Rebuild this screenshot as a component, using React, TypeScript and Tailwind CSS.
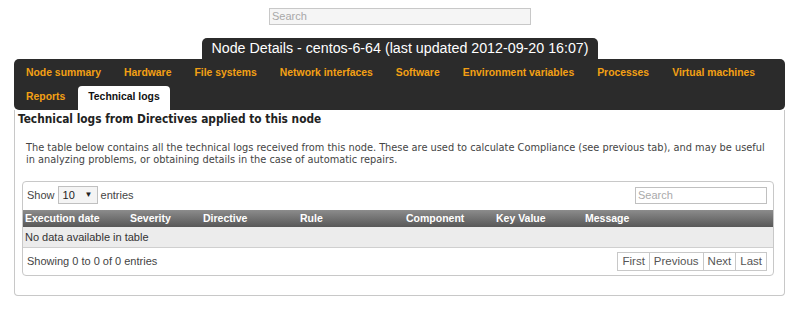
import React from "react";

const tabs = [
  "Node summary",
  "Hardware",
  "File systems",
  "Network interfaces",
  "Software",
  "Environment variables",
  "Processes",
  "Virtual machines",
  "Reports",
];

const cols: { label: string; w: string }[] = [
  { label: "Execution date", w: "w-[105px]" },
  { label: "Severity", w: "w-[73px]" },
  { label: "Directive", w: "w-[97px]" },
  { label: "Rule", w: "w-[106px]" },
  { label: "Component", w: "w-[90px]" },
  { label: "Key Value", w: "w-[89px]" },
  { label: "Message", w: "w-[100px]" },
];

export default function App() {
  return (
    <div className="w-[800px] h-[312px] bg-white font-['Liberation_Sans',Arial,sans-serif] text-[#333]">
      <div className="flex justify-center pt-[8px]">
        <div className="w-[262px] h-[17px] border border-[#c8c8c8] bg-[#f5f5f5] text-[11px] leading-[15px] pl-[2px] text-[#a8a8a8]">
          Search
        </div>
      </div>
      <div className="flex justify-center mt-[13px]">
        <div className="h-[21px] px-[9px] rounded-t-[5px] bg-[#2b2b2b] text-white text-[14.25px] leading-[21px]">
          Node Details - centos-6-64 (last updated 2012-09-20 16:07)
        </div>
      </div>
      <div className="ml-[14px] w-[771px]">
        <div className="bg-[#2b2b2b] rounded-[5px] h-[51px] pt-[3px] pl-[2px] flex flex-wrap content-start gap-x-[3px]">
          {tabs.map((t) => (
            <div
              key={t}
              className="h-[24px] px-[10px] text-[10.4px] leading-[22px] font-bold text-[#f3a014]"
            >
              {t}
            </div>
          ))}
          <div className="h-[24px] px-[10px] text-[10.4px] leading-[22px] font-bold text-[#111] bg-white rounded-t-[4px]">
            Technical logs
          </div>
        </div>
        <div className="border border-t-0 border-[#c8c8c8] rounded-b-[4px] h-[186px] pt-[2px]">
          <div className="pl-[3px] font-['DejaVu_Sans_Condensed','DejaVu_Sans',sans-serif] font-stretch-condensed font-bold text-[11.8px] leading-[14px] text-[#222]">
            Technical logs from Directives applied to this node
          </div>
          <div className="mt-[16px] pl-[11px] font-['DejaVu_Sans_Condensed','DejaVu_Sans',sans-serif] font-stretch-condensed text-[10.9px] leading-[12px] text-[#444] whitespace-nowrap overflow-hidden">
            <div>
              The table below contains all the technical logs received from this node. These are used to calculate Compliance (see previous tab), and may be useful
            </div>
            <div>
              in analyzing problems, or obtaining details in the case of automatic repairs.
            </div>
          </div>
          <div className="mt-[15px] ml-[7px] mr-[10px] border border-[#c8c8c8] rounded-[4px] h-[95px] text-[11px]">
            <div className="h-[28px] flex items-center justify-between pl-[4px] pr-[6px]">
              <div className="flex items-center gap-[3px] text-[#444] -mt-[2px]">
                <span>Show</span>
                <div className="w-[40px] h-[18px] border border-[#c0c0c0] bg-[#f4f4f4] flex items-center justify-between px-[4px] text-[#222]">
                  <span>10</span>
                  <span className="text-[8px]">▼</span>
                </div>
                <span>entries</span>
              </div>
              <div className="w-[132px] h-[17px] border border-[#c0c0c0] bg-white text-[#aaa] pl-[2px] leading-[15px] -mt-[2px]">
                Search
              </div>
            </div>
            <div className="h-[17px] flex items-center pl-[2px] bg-gradient-to-b from-[#8c8c8c] to-[#585858] text-white font-bold text-[10.5px]">
              {cols.map((c) => (
                <div key={c.label} className={c.w}>
                  {c.label}
                </div>
              ))}
            </div>
            <div className="h-[21px] bg-[#ececec] border-b border-[#cfcfcf] flex items-center pl-[2px] text-[#333]">
              No data available in table
            </div>
            <div className="h-[27px] flex items-center justify-between pl-[4px] pr-[6px]">
              <span className="text-[#444]">Showing 0 to 0 of 0 entries</span>
              <div className="flex h-[19px] border border-[#c8c8c8] text-[11.5px] text-[#555]">
                <div className="px-[4px] leading-[17px]">First</div>
                <div className="px-[4px] leading-[17px] border-l border-[#c8c8c8]">Previous</div>
                <div className="px-[4px] leading-[17px] border-l border-[#c8c8c8]">Next</div>
                <div className="px-[4px] leading-[17px] border-l border-[#c8c8c8]">Last</div>
              </div>
            </div>
          </div>
        </div>
      </div>
    </div>
  );
}
